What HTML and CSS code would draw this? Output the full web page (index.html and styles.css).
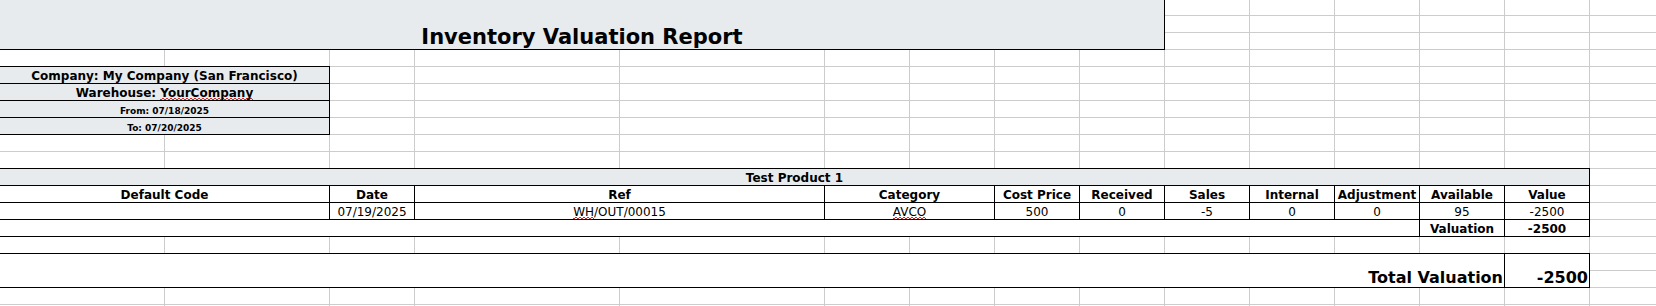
FILE: index.html
```html
<!DOCTYPE html>
<html lang="en">
<head>
<meta charset="utf-8">
<title>Inventory Valuation Report</title>
<link rel="stylesheet" href="styles.css">
</head>
<body>
<div class="sheet">
  <div class="cell fill title">Inventory Valuation Report</div>

  <div class="cell fill bold info r5">Company: My Company (San Francisco)</div>
  <div class="cell fill bold info r6"><span class="txt">Warehouse: <span class="spell">YourCompany</span></span></div>
  <div class="cell fill bold info small r7">From: 07/18/2025</div>
  <div class="cell fill bold info small r8">To: 07/20/2025</div>

  <div class="cell fill bold product">Test Product 1</div>

  <div class="cell bold r12 c-code">Default Code</div>
  <div class="cell bold r12 c-date">Date</div>
  <div class="cell bold r12 c-ref">Ref</div>
  <div class="cell bold r12 c-cat">Category</div>
  <div class="cell bold r12 c-cost">Cost Price</div>
  <div class="cell bold r12 c-rec">Received</div>
  <div class="cell bold r12 c-sales">Sales</div>
  <div class="cell bold r12 c-int">Internal</div>
  <div class="cell bold r12 c-adj">Adjustment</div>
  <div class="cell bold r12 c-avail">Available</div>
  <div class="cell bold r12 c-val">Value</div>

  <div class="cell r13 c-code"></div>
  <div class="cell r13 c-date">07/19/2025</div>
  <div class="cell r13 c-ref"><span class="txt"><span class="spell">WH</span>/OUT/00015</span></div>
  <div class="cell r13 c-cat"><span class="txt"><span class="spell">AVCO</span></span></div>
  <div class="cell r13 c-cost">500</div>
  <div class="cell r13 c-rec">0</div>
  <div class="cell r13 c-sales">-5</div>
  <div class="cell r13 c-int">0</div>
  <div class="cell r13 c-adj">0</div>
  <div class="cell r13 c-avail">95</div>
  <div class="cell r13 c-val">-2500</div>

  <div class="cell r14 c-blank"></div>
  <div class="cell bold r14 c-avail">Valuation</div>
  <div class="cell bold r14 c-val">-2500</div>

  <div class="cell bold big right total-label">Total Valuation</div>
  <div class="cell bold big right total-value">-2500</div>
</div>
</body>
</html>
```

FILE: styles.css
```css
html, body {
  margin: 0;
  padding: 0;
  background: #ffffff;
  overflow: hidden;
}

body {
  font-family: "DejaVu Sans", "Liberation Sans", sans-serif;
  color: #000000;
}

.sheet {
  --grid: #cccccc;
  display: grid;
  grid-template-columns: 165px 165px 85px 205px 205px repeat(9, 85px) 1fr;
  grid-template-rows: 16px repeat(18, 17px);
  width: 1656px;
  height: 306px;
  overflow: hidden;
  background-color: #ffffff;
  background-image:
    repeating-linear-gradient(to bottom, transparent 0 15px, var(--grid) 15px 16px, transparent 16px 17px),
    linear-gradient(to right,
      transparent 0 164px, var(--grid) 164px 165px,
      transparent 165px 329px, var(--grid) 329px 330px,
      transparent 330px 414px, var(--grid) 414px 415px,
      transparent 415px 619px, var(--grid) 619px 620px,
      transparent 620px 824px, var(--grid) 824px 825px,
      transparent 825px 909px, var(--grid) 909px 910px,
      transparent 910px 994px, var(--grid) 994px 995px,
      transparent 995px 1079px, var(--grid) 1079px 1080px,
      transparent 1080px 1164px, var(--grid) 1164px 1165px,
      transparent 1165px 1249px, var(--grid) 1249px 1250px,
      transparent 1250px 1334px, var(--grid) 1334px 1335px,
      transparent 1335px 1419px, var(--grid) 1419px 1420px,
      transparent 1420px 1504px, var(--grid) 1504px 1505px,
      transparent 1505px 1589px, var(--grid) 1589px 1590px,
      transparent 1590px);
}

.cell {
  display: flex;
  align-items: flex-end;
  justify-content: center;
  margin: -1px 0 0 -1px;
  min-width: 0;
  border: 1px solid #000000;
  background: #ffffff;
  font-size: 12px;
  line-height: normal;
  white-space: nowrap;
}

.fill { background: #e8ebee; }
.bold { font-weight: bold; }
.small { font-size: 9px; padding-bottom: 1px; }
.big { font-size: 16px; }
.right { justify-content: flex-end; padding-right: 1px; }

.txt { display: block; }

.spell {
  display: inline-block;
  line-height: 13px;
  background-image:
    linear-gradient(135deg, transparent 0 35%, #e02828 35% 65%, transparent 65%),
    linear-gradient(45deg, transparent 0 35%, #e02828 35% 65%, transparent 65%);
  background-size: 4px 2px, 4px 2px;
  background-position: 0 100%, 2px 100%;
  background-repeat: repeat-x;
}

.title {
  grid-row: 1 / 4;
  grid-column: 1 / 10;
  font-size: 21px;
  font-weight: bold;
}

.info { grid-column: 1 / 3; }
.r5 { grid-row: 5; }
.r6 { grid-row: 6; }
.r7 { grid-row: 7; }
.r8 { grid-row: 8; }

.product { grid-row: 11; grid-column: 1 / 15; }

.r12 { grid-row: 12; }
.r13 { grid-row: 13; }
.r14 { grid-row: 14; }

.c-code { grid-column: 1 / 3; }
.c-date { grid-column: 3; }
.c-ref { grid-column: 4 / 6; }
.c-cat { grid-column: 6 / 8; }
.c-cost { grid-column: 8; }
.c-rec { grid-column: 9; }
.c-sales { grid-column: 10; }
.c-int { grid-column: 11; }
.c-adj { grid-column: 12; }
.c-avail { grid-column: 13; }
.c-val { grid-column: 14; }
.c-blank { grid-column: 1 / 13; }

.total-label { grid-row: 16 / 18; grid-column: 1 / 14; }
.total-value { grid-row: 16 / 18; grid-column: 14; }
```
